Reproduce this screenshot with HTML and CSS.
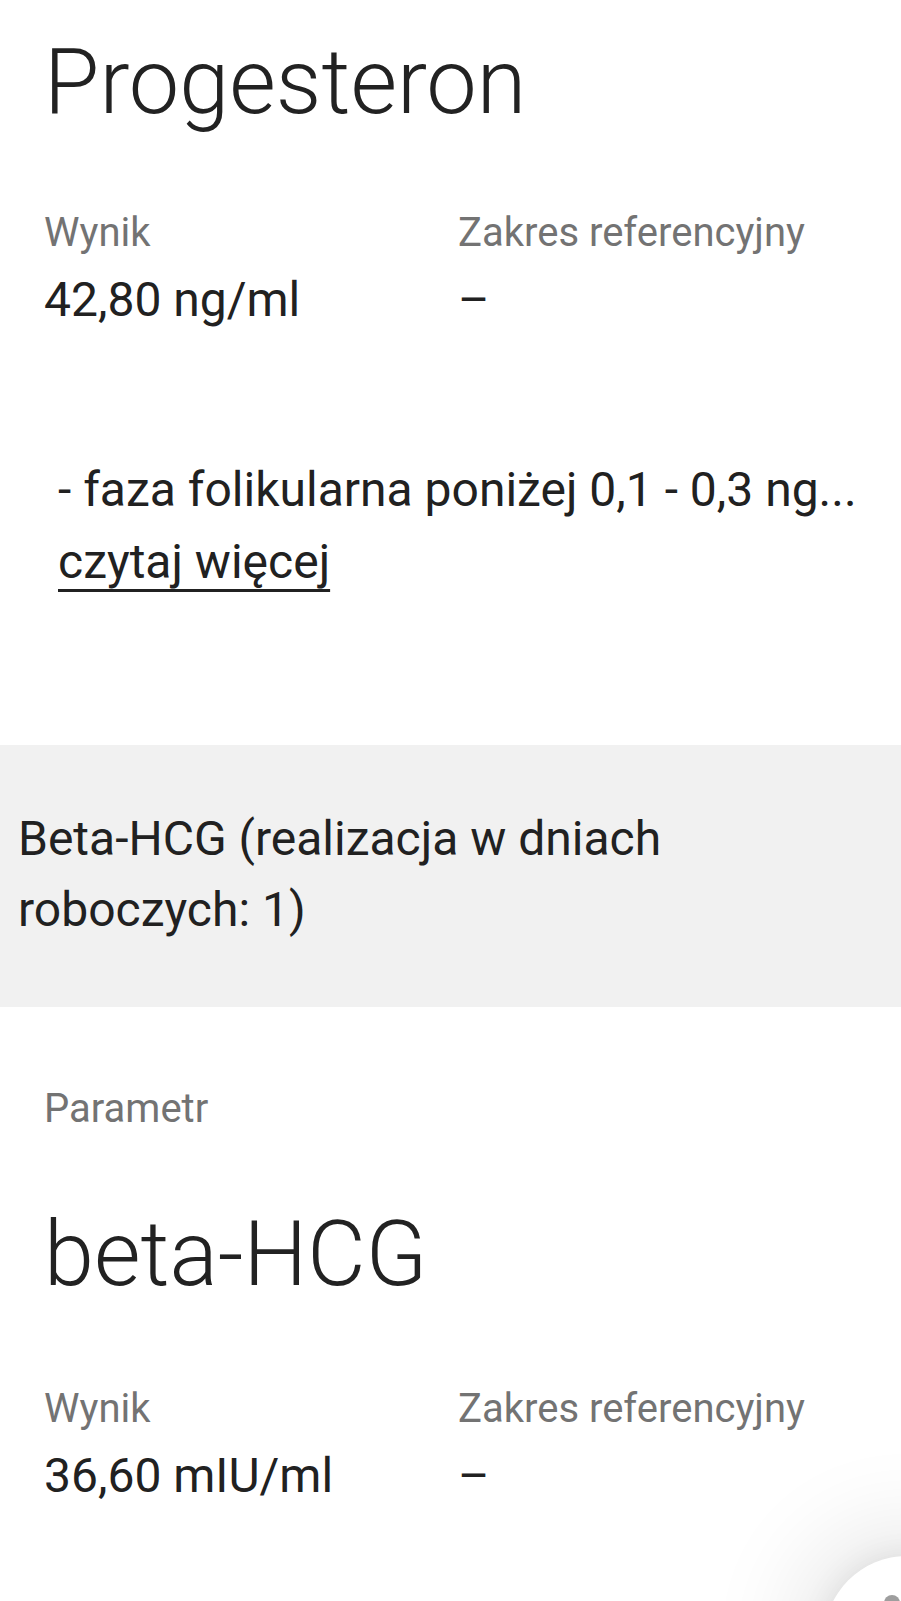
FILE: index.html
```html
<!DOCTYPE html>
<html lang="pl">
<head>
<meta charset="utf-8">
<title>Wyniki badań</title>
<link rel="stylesheet" href="styles.css">
</head>
<body>
<main class="page">
  <section class="result result--first">
    <h1 class="result__title">Progesteron</h1>
    <div class="result__grid">
      <div class="label">Wynik</div>
      <div class="label">Zakres referencyjny</div>
      <div class="value">42,80 ng/ml</div>
      <div class="value">–</div>
    </div>
    <div class="note">
      <p class="note__text">- faza folikularna poniżej 0,1 - 0,3 ng...</p>
      <a class="note__more" href="#">czytaj więcej</a>
    </div>
  </section>

  <div class="band">Beta-HCG (realizacja w dniach<br>roboczych: 1)</div>

  <section class="result result--second">
    <div class="label">Parametr</div>
    <h1 class="result__title result__title--spaced">beta-HCG</h1>
    <div class="result__grid result__grid--second">
      <div class="label">Wynik</div>
      <div class="label">Zakres referencyjny</div>
      <div class="value">36,60 mIU/ml</div>
      <div class="value">–</div>
    </div>
  </section>
</main>
<div class="overlay">
  <div class="fab"><span class="fab__dot"></span></div>
</div>
</body>
</html>
```

FILE: styles.css
```css
html, body {
  margin: 0;
  padding: 0;
  background: #ffffff;
  overflow: hidden;
}

body {
  font-family: Roboto, "Noto Sans", "Liberation Sans", sans-serif;
  color: #212121;
  height: 1601px;
  position: relative;
}

.page {
  display: flex;
  flex-direction: column;
}

.result {
  padding: 0 44px;
}

.result--first {
  padding-top: 33px;
}

.result--second {
  padding-top: 77px;
}

.result__title {
  margin: 0;
  font-size: 90px;
  line-height: 100px;
  font-weight: 300;
  color: #222222;
}

.result__title--spaced {
  margin-top: 71px;
}

.result__grid {
  margin-top: 75px;
  display: grid;
  grid-template-columns: 414px 1fr;
  row-gap: 12px;
}

.result__grid--second {
  margin-top: 79px;
}

.label {
  font-size: 40px;
  line-height: 50px;
  color: #737373;
}

.value {
  font-size: 48px;
  line-height: 60px;
  color: #212121;
}

.note {
  margin-top: 124px;
  padding-left: 14px;
  font-size: 48px;
  line-height: 72px;
  display: flex;
  flex-direction: column;
  align-items: flex-start;
}

.note__text {
  margin: 0;
  white-space: nowrap;
}

.note__more {
  color: #212121;
  text-decoration: underline;
  text-decoration-thickness: 3px;
  text-underline-offset: 11px;
}

.band {
  margin-top: 147px;
  background: #f1f1f1;
  padding: 58px 18px 62px;
  font-size: 48px;
  line-height: 71px;
  color: #212121;
}

.overlay {
  position: absolute;
  inset: 0;
  overflow: hidden;
  pointer-events: none;
}

.fab {
  position: absolute;
  left: 824px;
  top: 1556px;
  width: 166px;
  height: 166px;
  border-radius: 50%;
  background: #ffffff;
  box-shadow: 0 0 100px 24px rgba(0, 0, 0, 0.11), 0 0 30px rgba(0, 0, 0, 0.08);
}

.fab__dot {
  position: absolute;
  left: 60px;
  top: 39px;
  width: 16px;
  height: 16px;
  border-radius: 50%;
  background: #9e9e9e;
}
```
